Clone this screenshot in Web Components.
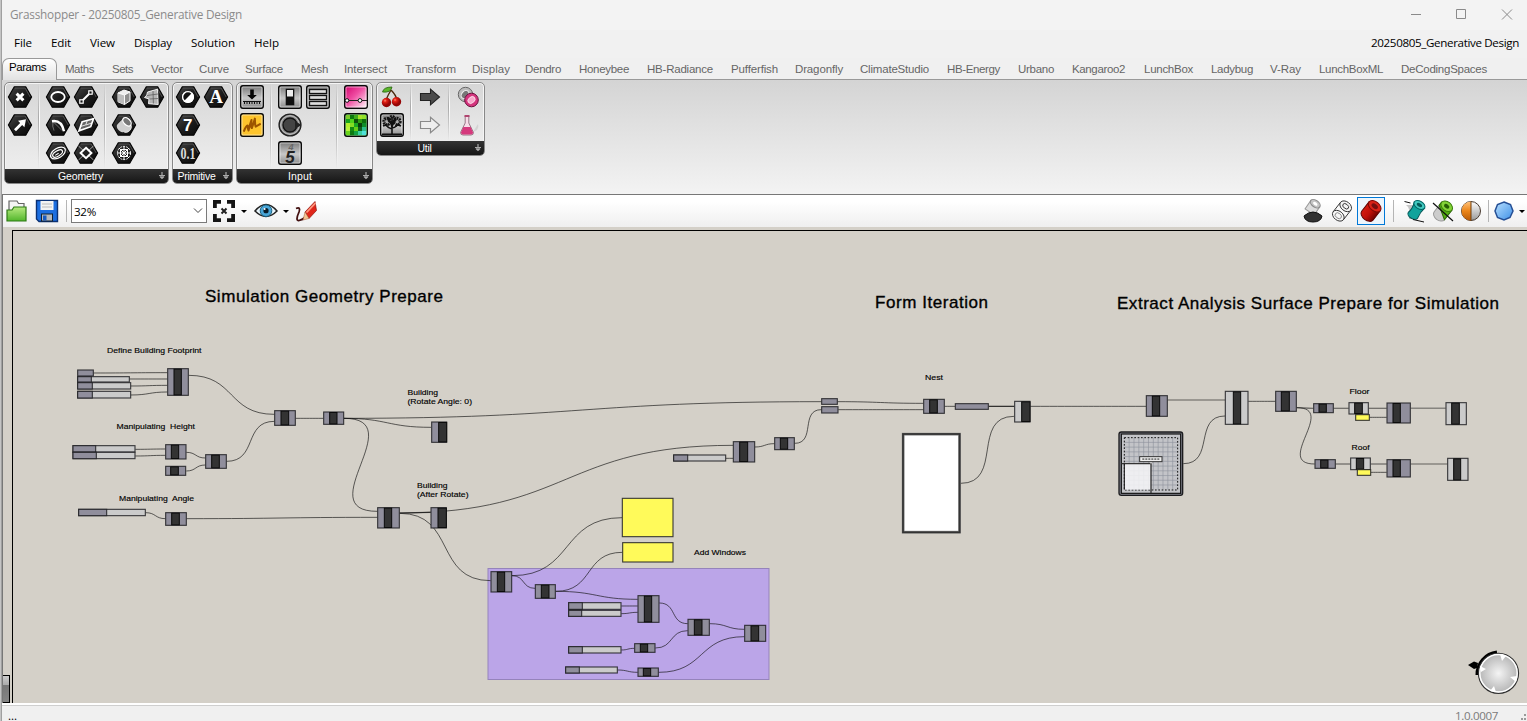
<!DOCTYPE html>
<html lang="en">
<head>
<meta charset="utf-8">
<title>Grasshopper - 20250805_Generative Design</title>
<style>
html,body{margin:0;height:100%;overflow:hidden;background:#f0f0f0}
</style>
</head>
<body>
<gh-window></gh-window>
<script>
function define(name, html, init) {
  const t = document.createElement('template');
  t.innerHTML = html;
  customElements.define(name, class extends HTMLElement {
    constructor() { super(); this.attachShadow({mode: 'open'}).append(t.content.cloneNode(true)); }
    connectedCallback() { if (init && !this.ready) { this.ready = true; init(this, this.shadowRoot); } }
  });
}

/* Text tracked to an exact width */
define('fit-text', `<style>:host{display:block;white-space:nowrap;flex:none}span{display:inline-block;white-space:pre}</style><span><slot></slot></span>`, (el, root) => {
  const w = +el.getAttribute('w'), s = root.querySelector('span');
  s.style.letterSpacing = (w - s.getBoundingClientRect().width) / el.textContent.length + 'px';
  el.style.width = w + 'px';
});

const hex = inner => `<path d="M8.3 3.8H19.7L25.6 14 19.7 24.2H8.3L2.4 14Z" fill="url(#hx)" stroke="#050505" stroke-width="1.2" stroke-linejoin="round"/><path d="M8.9 5H19.1L24.2 14" fill="none" stroke="#666" stroke-width=".7"/>${inner}`;
const tile = (fill, inner) => `<rect x="2.7" y="2.7" width="22.6" height="22.6" rx="2.2" fill="${fill}" stroke="#0a0a0a" stroke-width="1.4"/><rect x="4" y="4" width="20" height="20" rx="1" fill="none" stroke="#fff" stroke-opacity=".65" stroke-width=".8"/>${inner}`;
const W = 'fill="none" stroke="#fff"';
const greens = ['#7dcb2b','#0d7a10','#3fae1c','#a6e22b','#8ee02a','#16a51a','#4fd31c','#0c4e0c','#2f9d12','#0d6e0e','#b3f02d','#86dc24','#1aa722','#0b3f0b','#0f8e2a','#b7f23a','#138a13','#66cf16','#0e5f20','#2bbd8b','#6ad41b','#0a7a10','#11a040','#39d0a0','#4fe0d8'];
const ICONS = {
  point: hex(`<path d="M10.6 10.6l6.8 6.8M17.4 10.6l-6.8 6.8" ${W} stroke-width="3"/>`),
  vector: hex(`<path d="M8 18.2l6.2-6.2-2.2-2.2 8-1.6-1.6 8-2.2-2.2-6.2 6.2z" fill="#fff"/>`),
  circle: hex(`<ellipse cx="14" cy="14" rx="6.7" ry="5" ${W} stroke-width="1.8"/>`),
  line: hex(`<path d="M10 18l8-8" ${W} stroke-width="2"/><rect x="7.8" y="16.8" width="3.4" height="3.4" fill="#111" stroke="#fff" stroke-width="1.2"/><rect x="16.8" y="7.8" width="3.4" height="3.4" fill="#111" stroke="#fff" stroke-width="1.2"/>`),
  arc: hex(`<path d="M8 10.200q9.500-1.500 12 10" ${W} stroke-width="2.400"/><path d="M9 10.500q-1 5 1 9M9 10.500l9 9" ${W} stroke-width=".6" opacity=".6"/>`),
  plane: hex(`<path d="M10.2 10.800l11.300-3-2.800 7.900-11.700 4.100z" fill="#666" stroke="#fff" stroke-width="1.700"/><path d="M8.8 15.4l5-1.500 1.500-4.500M13.800 14l6-2" ${W} stroke-width=".8"/>`),
  curve: hex(`<g transform="rotate(-32 14 14)"><ellipse cx="14" cy="14" rx="8.2" ry="4.8" ${W} stroke-width="1.300"/><ellipse cx="13.4" cy="14.2" rx="5.5" ry="2.6" ${W} stroke-width="1.200"/><path d="M10.4 14.5h4" ${W}/></g>`),
  grid: hex(`<path d="M6.5 7l15 14M21.5 7l-15 14" ${W} stroke-width=".9" opacity=".65"/><path d="M14 8.8l5.4 5.2-5.4 5.2L8.6 14z" fill="#222" stroke="#fff" stroke-width="2"/>`),
  box: hex(`<path d="M14 7l6 2v8.800l-5.500 3.700-6.500-2.700V10z" fill="#909090" stroke="#fff"/><path d="M8 10l6.500 2v9.500l-6.500-2.700z" fill="#bdbdbd"/><path d="M8 10l6-3 6 2-5.500 3z" fill="#eee"/><path d="M8 10l6.500 2v9.500M14.500 12L20 9" ${W} stroke-width=".9"/>`),
  brep: hex(`<path d="M9.500 9l10-2.800.7 15.300-9.700-.800.500-4.700-4.500-1.500q3-2 3-5.500z" fill="#b5b5b5" stroke="#fff" stroke-width=".9"/><path d="M9 12.500l11-1.500M15 8l.400 12.500M11.500 16l8.500-.500" stroke="#555" fill="none" stroke-width=".7"/>`),
  cylinder: hex(`<g transform="rotate(45 14 14)"><path d="M9 10v8.500a5 3.500 0 0 0 10 0V10z" fill="#d0d0d0" stroke="#fff" stroke-width=".6" transform="rotate(-90 14 14)"/></g><g transform="rotate(-45 14 14)"><path d="M10 8.800h8.500v10.400H10a3.500 5.200 0 0 1 0-10.400z" fill="#cfcfcf"/></g><ellipse cx="17" cy="10.800" rx="3.200" ry="5" transform="rotate(-45 17 10.800)" fill="#777" stroke="#fff" stroke-width="1.300"/>`),
  mesh: hex(`<circle cx="14" cy="14" r="6.600" ${W} stroke-width=".9" stroke-dasharray="2 1"/><path d="M14 7v14M7 14h14M9 9l10 10M19 9L9 19M10.500 10.500h7v7h-7z" ${W} stroke-width="1"/>`),
  bool: hex(`<circle cx="14" cy="14" r="6" fill="#fff"/><path d="M18.2 9.8A6 6 0 0 1 9.8 18.2z" transform="rotate(180 14 14)" fill="#111"/><circle cx="14" cy="14" r="5.4" ${W} stroke-width="1.4"/>`),
  text: hex(`<text x="14" y="20.2" text-anchor="middle" font-family="Liberation Serif,serif" font-weight="700" font-size="19" fill="#fff">A</text>`),
  int: hex(`<text x="13.8" y="20.200" text-anchor="middle" font-family="Liberation Sans,sans-serif" font-weight="700" font-size="17" fill="#fff">7</text>`),
  num: hex(`<text x="14" y="19.800" text-anchor="middle" textLength="15" lengthAdjust="spacingAndGlyphs" font-family="Liberation Serif,serif" font-weight="700" font-size="17" fill="#ddd">0.1</text>`),
  button: tile('url(#gr)', `<path d="M12.2 6.500h3.600v5.500h3L14 16.600 9.200 12h3z" fill="#050505"/><path d="M5 18.500h18M6.500 18v3M9 18v3M11.500 18v3M14 18v3M16.500 18v3M19 18v3M21.500 18v3" stroke="#111" stroke-width="1"/>`),
  graph: tile('#fdc42c', `<path d="M5.500 19q2.500-5 4-5 0 4 .500 5 2-6 4-10-1 6-.500 8 2-4 4-9-.500 6 0 8l4.500-2" transform="rotate(-6 14 14)" fill="none" stroke="#9c5500" stroke-width="2.100" stroke-linecap="round" stroke-linejoin="round"/>`),
  toggle: tile('url(#gr)', `<rect x="9.700" y="5.700" width="8.600" height="16.600" fill="#111"/><rect x="11" y="7" width="6" height="6.500" fill="#eee"/>`),
  list: tile('url(#gr)', `<g fill="#ddd" stroke="#111" stroke-width="1.300"><rect x="5.500" y="6.500" width="17" height="4"/><rect x="5.500" y="12.500" width="17" height="4"/><rect x="5.500" y="18.500" width="17" height="4"/></g>`),
  knob: `<circle cx="14" cy="14" r="10.900" fill="#888" stroke="#222" stroke-width="1.400"/><circle cx="14" cy="14" r="9.300" fill="none" stroke="#ccc" stroke-width=".9"/><circle cx="14" cy="14" r="7" fill="#444" stroke="#111" stroke-width="1.300"/><path d="M19 10l6.500 4-6.500 4z" fill="#222"/>`,
  digit: tile('url(#gr)', `<text x="15" y="10.500" text-anchor="middle" font-family="Liberation Sans,sans-serif" font-style="italic" font-weight="700" font-size="9" fill="#666">4</text><text x="14" y="24" text-anchor="middle" font-family="Liberation Sans,sans-serif" font-style="italic" font-weight="700" font-size="17" fill="#222">5</text>`),
  slider: tile('url(#pk)', `<path d="M3 17.500h22" stroke="#222" stroke-width="1.200"/><circle cx="5" cy="17.500" r="1.800" fill="#fff" stroke="#111"/><circle cx="18" cy="17.500" r="1.900" fill="#fff" stroke="#111"/>`),
  swatch: tile('#2a2', greens.map((c, i) => `<rect x="${4 + i % 5 * 4}" y="${4 + (i / 5 | 0) * 4}" width="4.100" height="4.100" fill="${c}"/>`).join('')),
  cherry: `<path d="M13 7q-3 5-5 10M13 7q5 5 6 10" fill="none" stroke="#4c2a10" stroke-width="1.400"/><path d="M4.500 9q1-5 9.500-5-1 6-9.500 5z" fill="#5bb82a" stroke="#276010" stroke-width=".8"/><circle cx="8.500" cy="19.500" r="4.700" fill="url(#rd)"/><circle cx="18.500" cy="18.800" r="4.700" fill="url(#rd)"/>`,
  tree: tile('url(#gr)', `<path d="M14 24v-8M14 18q-4-1-7-5M14 17q5-1 7-5M14 16q-1-5-4-8M14 16q1-5 4-8M14 18v-12M10 14q-3 0-5 1M18 14q3 0 5 1" stroke="#111" stroke-width="1.600" fill="none"/><g fill="none" stroke="#111" stroke-dasharray="1.600 .8"><circle cx="9" cy="10.500" r="3.200" stroke-width="3"/><circle cx="14" cy="8.500" r="3" stroke-width="3"/><circle cx="19" cy="10.500" r="3.200" stroke-width="3"/></g><path d="M4 22.500h20v2H4z" fill="#111"/>`),
  arrowDark: `<path d="M4.500 10.500h10V6.200L23.500 14l-9 7.800v-4.300h-10z" fill="#4b4b4b" stroke="#222" stroke-width="1.100"/>`,
  arrowLight: `<path d="M4.500 10.500h10V6.200L23.500 14l-9 7.800v-4.300h-10z" fill="#eee" stroke="#8a8a8a" stroke-width="1.200"/>`,
  cluster: `<circle cx="11.500" cy="11.500" r="7.200" fill="#bbb" stroke="#666"/><ellipse cx="11" cy="11.500" rx="3.200" ry="4.500" transform="rotate(40 11 11.500)" fill="#777" stroke="#eee"/><circle cx="17.500" cy="17" r="6.800" fill="#d4347d" stroke="#6d0f3d"/><ellipse cx="17.500" cy="17" rx="4" ry="3" transform="rotate(-40 17.500 17)" fill="#f8a7cb" stroke="#fff" stroke-width=".6"/>`,
  flask: `<path d="M19 21l5-8q1 3-1 6z" fill="#999" opacity=".25"/><path d="M11.200 5v7L6.500 21.500q0 2.500 2.500 2.500h8q2.500 0 2.500-2.500L14.800 12V5z" fill="#f7dce8" stroke="#8e6b7c" stroke-width=".9"/><path d="M9.300 16L7 21.500q0 2 2 2h8q2 0 2-2L16.700 16z" fill="#d53a7d"/><path d="M10.500 5h5" stroke="#b0446f" stroke-width="2"/>`,
  open: `<path d="M6 14V4h8l1.500 2.500H21V15" fill="#f4f4f4" stroke="#666" stroke-width="1.200"/><path d="M4 24V13h5l2-3h12v14z" fill="url(#gn)" stroke="#2d7a14" stroke-width="1.200"/>`,
  save: `<path d="M3.500 3.500h21v21H6l-2.500-2.500z" fill="#1c6ee0" stroke="#0b3174" stroke-width="1.400"/><rect x="7.500" y="4" width="13" height="9" fill="#f3f3f3"/><path d="M9 7h10M9 10h10" stroke="#bbb"/><rect x="8.500" y="17" width="11" height="7" fill="#b5b8bd" stroke="#123"/><rect x="10" y="18.500" width="3.500" height="5" fill="#175ac0"/>`,
  extents: `<path d="M3 11V3h8v3.800H6.800V11zM17 3h8v8h-3.800V6.800H17zM3 17h3.800v4.200H11V25H3zM21.200 17H25v8h-8v-3.800h4.200z" fill="#151515"/><path d="M11.500 11.500l5 5M16.500 11.500l-5 5" stroke="#222" stroke-width="2"/>`,
  eye: `<path d="M3 14Q14 1 25 14 14 25 3 14z" fill="#e8f4fa" stroke="#222" stroke-width="1.500"/><circle cx="14" cy="13.700" r="5.800" fill="#49a6d8" stroke="#17607f"/><circle cx="14" cy="13.700" r="2.600" fill="#0a1c28"/><circle cx="12.600" cy="12" r="1" fill="#fff"/>`,
  pencil: `<path d="M4 11.500q5-2 3 3.500-4 9 0 8.500 4-1 6-3" fill="none" stroke="#421010" stroke-width="1.800"/><path d="M13 15L23 4.500l1.500 9L17 21.500z" fill="#e0261a" stroke="#8d140d" stroke-width=".7"/><path d="M14.500 15.500L23.500 6" stroke="#ff9a80" stroke-width="1.800"/><path d="M13 15l4 6.500-6 1.500z" fill="#f2c592" stroke="#a5583a" stroke-width=".5"/>`,
  shadeHalf: `<g transform="rotate(35 14 10)"><path d="M8.500 6h11v10h-11z" fill="#ddd" stroke="#999"/><ellipse cx="14" cy="6" rx="5.500" ry="3.400" fill="#c4c4c4" stroke="#888"/><ellipse cx="14" cy="6" rx="2.500" ry="1.500" fill="#fff"/></g><path d="M5 19q9-8 18 0-1 6-9 6t-9-6z" fill="#333" stroke="#111"/>`,
  wire: `<g transform="rotate(38 14 14)" fill="none" stroke="#333" stroke-width=".9"><path d="M7.500 8v12M20.500 8v12"/><ellipse cx="14" cy="8" rx="6.500" ry="4.600" fill="#f4f4f4"/><ellipse cx="14" cy="8" rx="3.300" ry="2.200"/><ellipse cx="14" cy="20" rx="6.500" ry="4.600"/><ellipse cx="14" cy="20" rx="3.500" ry="2.500" stroke="#888"/></g>`,
  shaded: `<g transform="rotate(38 14 14)"><path d="M6.800 8v12a7.200 4.500 0 0 0 14.400 0V8z" fill="url(#rc)" stroke="#5c0505"/><ellipse cx="14" cy="8" rx="7.200" ry="4.700" fill="#d92318" stroke="#7b0906"/><ellipse cx="14" cy="8" rx="3.600" ry="2.200" fill="#761010"/></g>`,
  teal: `<path d="M5 8q5 3 3 14h5V8z" fill="#999" opacity=".55"/><g transform="rotate(30 15 13)"><path d="M9.500 7q2 6 0 12a5.500 3.500 0 0 0 11 0q-1-6 1-12z" fill="#10a39c" stroke="#055"/><ellipse cx="15.500" cy="7" rx="6" ry="3.800" fill="#43cac1" stroke="#066"/><ellipse cx="15.500" cy="7" rx="3" ry="1.700" fill="#045b59"/></g><path d="M3.500 4.500l6 1.500M12 22.500l11 2.500" stroke="#111"/>`,
  green: `<g transform="rotate(38 14 14)"><path d="M7.500 8v12a6.500 4.500 0 0 0 13 0V8z" fill="#ccc" stroke="#999"/><path d="M20.500 8v12L7.500 12V8z" fill="#54ac12" stroke="#2c6b05"/><ellipse cx="14" cy="8" rx="6.500" ry="4.500" fill="#82d336" stroke="#397d0b"/><ellipse cx="14" cy="8" rx="3" ry="2" fill="#275f04"/></g><path d="M4 6l20 18" stroke="#111" stroke-width="1.200"/>`,
  ball: `<circle cx="14" cy="14" r="9.500" fill="url(#sv)" stroke="#4a3b31"/><path d="M14 4.500a9.500 9.500 0 0 0 0 19z" fill="url(#og)"/><path d="M14 4.500v19" stroke="#704010"/>`,
  gem: `<path d="M14 5l6.500 2.500 2.500 6.500-3 6.500-6 2.500-6.500-2.500L5 14l2.500-6.500z" fill="url(#bl)" stroke="#254f95" stroke-width="1.500"/>`
};
const DEFS = `<defs><linearGradient id="hx" x1="0" y1="0" x2="1" y2="1"><stop offset="0" stop-color="#454545"/><stop offset=".5" stop-color="#1d1d1d"/><stop offset="1" stop-color="#080808"/></linearGradient><linearGradient id="gr" x1="0" y1="0" x2="0" y2="1"><stop offset="0" stop-color="#777"/><stop offset=".55" stop-color="#c8c8c8"/><stop offset="1" stop-color="#8a8a8a"/></linearGradient><linearGradient id="pk" x1="0" y1="0" x2="1" y2="1"><stop offset="0" stop-color="#d3006c"/><stop offset=".45" stop-color="#ef4fa3"/><stop offset="1" stop-color="#fff"/></linearGradient><radialGradient id="rd" cx=".35" cy=".3"><stop offset="0" stop-color="#ff8a6f"/><stop offset=".35" stop-color="#e21f14"/><stop offset="1" stop-color="#950505"/></radialGradient><linearGradient id="gn" x1="0" y1="0" x2="0" y2="1"><stop offset="0" stop-color="#b7ea80"/><stop offset="1" stop-color="#52b62c"/></linearGradient><linearGradient id="rc"><stop offset="0" stop-color="#d41b10"/><stop offset=".5" stop-color="#c01009"/><stop offset="1" stop-color="#720303"/></linearGradient><linearGradient id="bl" x1="0" y1="0" x2="1" y2="1"><stop offset="0" stop-color="#b9e0ff"/><stop offset="1" stop-color="#3d8fe6"/></linearGradient><linearGradient id="sv" x1="0" y1="0" x2="0" y2="1"><stop offset="0" stop-color="#fff"/><stop offset="1" stop-color="#999"/></linearGradient><linearGradient id="og" x1="0" y1="0" x2="0" y2="1"><stop offset="0" stop-color="#ffc27a"/><stop offset=".5" stop-color="#ec8518"/><stop offset="1" stop-color="#b85a06"/></linearGradient></defs>`;

define('gh-icon', `<style>:host{display:block;width:28px;height:28px;flex:none}svg{display:block}</style>`, (el, root) => {
  root.innerHTML += `<svg width="28" height="28" viewBox="0 0 28 28">${DEFS}${ICONS[el.getAttribute('name')] || ''}</svg>`;
});

/* Ribbon panel: groups of icon columns over a black caption */
define('gh-panel', `<style>
:host{display:block;flex:none;box-sizing:border-box;border:1px solid #888;border-radius:5px;background:linear-gradient(#d6d6d6,#ececec 80%);overflow:hidden;box-shadow:inset 0 0 0 1px #f5f5f5}
.body{display:flex;padding:0 1px}
.group{display:flex}.col{display:flex;flex-direction:column}
.sep{width:10px;background:linear-gradient(#0000,#aaa 40%,#0000) 4px 0/1px 100% no-repeat,linear-gradient(#0000,#fff 40%,#0000) 5px 0/1px 100% no-repeat}
.cap{display:flex;justify-content:center;align-items:center;height:14px;background:linear-gradient(#333,#161616);color:#fff;font:10.500px/13px "Liberation Sans",sans-serif;position:relative}
svg{position:absolute;right:2px;top:3px}
</style><div class="body"></div><div class="cap"><fit-text></fit-text><svg width="8" height="8"><path d="M4 0v7M1 3.500h6M2 4.500l2 2 2-2" stroke="#aaa" fill="none" stroke-width="1.200"/></svg></div>`, (el, root) => {
  const body = root.querySelector('.body'), rows = el.getAttribute('rows');
  body.style.height = rows * 28 + 2 + 'px';
  body.innerHTML = el.getAttribute('icons').split('|').map(g => `<div class="group">${g.split('/').map(c => `<div class="col">${c.split(',').map(i => `<gh-icon name="${i}"></gh-icon>`).join('')}</div>`).join('')}</div>`).join('<div class="sep"></div>');
  const shift = +el.getAttribute('shift') || 0;
  const f = document.createElement('fit-text');
  f.setAttribute('w', el.getAttribute('tw'));
  f.textContent = el.getAttribute('label');
  f.style.marginRight = shift + 'px';
  root.querySelector('fit-text').replaceWith(f);
  el.style.width = el.getAttribute('w') + 'px';
});

define('gh-titlebar', `<style>
:host{display:flex;height:30px;background:#f3f3f3;align-items:center;padding-left:8px;color:#8b8b8b;font:11.800px/29px "Open Sans",sans-serif}
fit-text{margin-top:-1px}
svg{margin-left:auto}</style><fit-text w="232">Grasshopper - 20250805_Generative Design</fit-text>
<svg width="130" height="30"><path d="M14 14.500h10M59.500 9.500h9v9h-9zM105 9.500l10 10M115 9.500l-10 10" fill="none" stroke="#8a8a8a"/></svg>`);

define('gh-menubar', `<style>
:host{display:flex;height:28px;background:#f1f1f1;align-items:center;padding:0 8px 0 12px;color:#000;font:11.600px/26px "Open Sans",sans-serif}
nav{display:flex;gap:19px}.doc{margin-left:auto}fit-text{margin-top:-2px}</style>
<nav><fit-text w="18">File</fit-text><fit-text w="20">Edit</fit-text><fit-text w="25">View</fit-text><fit-text w="38">Display</fit-text><fit-text w="44">Solution</fit-text><fit-text w="25">Help</fit-text></nav><fit-text class="doc" w="148">20250805_Generative Design</fit-text>`);

const TABS = [['Params',9,37],['Maths',65,29],['Sets',112,21],['Vector',151,32],['Curve',199,30],['Surface',245,38],['Mesh',301,27],['Intersect',344,43],['Transform',405,51],['Display',472,38],['Dendro',525,36],['Honeybee',579,50],['HB-Radiance',647,66],['Pufferfish',731,47],['Dragonfly',795,48],['ClimateStudio',860,69],['HB-Energy',947,53],['Urbano',1018,36],['Kangaroo2',1072,53],['LunchBox',1144,49],['Ladybug',1211,42],['V-Ray',1270,31],['LunchBoxML',1319,64],['DeCodingSpaces',1401,86]];
define('gh-tabs', `<style>
:host{display:flex;height:22px;background:#f0f0f0;font:11.500px/22px "Liberation Sans",sans-serif;color:#666;box-shadow:inset 0 -1px #999}
.tab{flex:none}.on{box-sizing:border-box;border:1px solid #999;border-bottom:0;border-radius:7px 7px 0 0;background:linear-gradient(#fff,#e2e2e2);color:#000;line-height:17px;padding-left:6px;height:22px}</style>`, (el, root) => {
  root.innerHTML += TABS.map(([t, x, w], i) => {
    const next = TABS[i + 1] ? TABS[i + 1][1] : 1527;
    return i ? `<div class="tab" style="width:${next - x}px"><fit-text w="${w}">${t}</fit-text></div>` : `<div class="tab on" style="width:55px;margin-right:8px"><fit-text w="${w}">${t}</fit-text></div>`;
  }).join('');
});

define('gh-ribbon', `<style>:host{display:flex;box-sizing:border-box;height:114px;align-items:flex-start;gap:3px;padding:2px;background:linear-gradient(#d4d4d4,#f3f3f3)}</style>
<gh-panel w="165" rows="3" tw="45" shift="12" label="Geometry" icons="point,vector|circle,arc,curve/line,plane,grid|box,cylinder,mesh/brep"></gh-panel>
<gh-panel w="61" rows="3" tw="38" shift="12" label="Primitive" icons="bool,int,num/text"></gh-panel>
<gh-panel w="137" rows="3" tw="24" shift="9" label="Input" icons="button,graph|toggle,knob,digit/list|slider,swatch"></gh-panel>
<gh-panel w="109" rows="2" tw="14" shift="12" label="Util" icons="cherry,tree|arrowDark,arrowLight|cluster,flask"></gh-panel>`);

define('gh-toolbar', `<style>
:host{display:flex;box-sizing:border-box;height:33px;border-top:1px solid #777;background:linear-gradient(#fff 20%,#efefef);align-items:center;font:11.600px "Open Sans",sans-serif}
i{width:1px;height:22px;background:#b5b5b5;flex:none}
.combo{box-sizing:border-box;width:136px;height:24px;border:1px solid #7a7a7a;background:#fff;display:flex;align-items:center;padding:0 3px 0 2px;margin:0 4px 0 4px;color:#000}
.combo svg{margin-left:auto}
b{width:0;height:0;border:3px solid #0000;border-top-color:#000;border-bottom:0;flex:none}
.on{box-sizing:border-box;width:28px;height:28px;border:1px solid #0078d7;background:#eef5fb;display:grid;place-items:center}
.on gh-icon{margin:-1px}
</style>
<gh-icon name="open"></gh-icon><gh-icon name="save" style="margin-left:2px"></gh-icon><i style="margin-left:5px"></i>
<div class="combo"><fit-text w="22">32%</fit-text><svg width="10" height="6"><path d="M1 .5l4 4 4-4" fill="none" stroke="#444"/></svg></div>
<gh-icon name="extents" style="margin-left:-1px"></gh-icon><b style="margin-left:3px"></b><gh-icon name="eye" style="margin-left:5px"></gh-icon><b style="margin-left:3px"></b><gh-icon name="pencil" style="margin-left:3px"></gh-icon>
<gh-icon name="shadeHalf" style="margin-left:auto"></gh-icon><gh-icon name="wire" style="margin-left:1px"></gh-icon><div class="on" style="margin-left:1px"><gh-icon name="shaded"></gh-icon></div><i style="margin-left:8px"></i>
<gh-icon name="teal" style="margin-left:7px"></gh-icon><gh-icon name="green"></gh-icon><gh-icon name="ball"></gh-icon><i style="margin-left:3px"></i><gh-icon name="gem" style="margin-left:1px"></gh-icon><b style="margin:0 2px 0 1px"></b>`);

/* Definition graph. Each cluster has its own origin and a third-of-a-pixel unit. */
const P = '#908e9c', L = '#cbcbcb', D = '#333';
const box = (x1, y1, x2, y2, f) => `<rect x="${x1 + 1}" y="${y1 + 1}" width="${x2 - x1 - 2}" height="${y2 - y1 - 2}" fill="${f}" stroke="#1f1f22" stroke-opacity=".85" stroke-width="3.400"/>`;
const comp = (x1, y1, x2, y2, a, b, f = P) => box(x1, y1, x2, y2, f) + `<rect x="${a + 1}" y="${y1 + 2.500}" width="${b - a - 2}" height="${y2 - y1 - 5}" fill="${D}" stroke="#0b0b0b" stroke-width="3"/>`;
const slid = (x1, y1, x2, y2, s) => box(x1, y1, x2, y2, L) + box(x1, y1, s + 1, y2, P);
const wire = (x1, y1, x2, y2, c, w = 2.800, o = .7) => { c = c || Math.hypot(x2 - x1, y2 - y1) / 2; return `<path d="M${x1} ${y1}C${x1 + c} ${y1} ${x2 - c} ${y2} ${x2} ${y2}" fill="none" stroke="#111" stroke-opacity="${o}" stroke-width="${w}"/>`; };
const cluster = (x, y, wires, nodes) => [`<g transform="translate(${x} ${y}) scale(.33333)">${wires.map(a => wire(...a)).join('')}</g>`, `<g transform="translate(${x} ${y}) scale(.33333)">${nodes.join('')}</g>`];
const mdGrid = () => { let s = ''; for (let i = 1; i < 11; i++) s += `M${73 + i * 14.500} 203v156M73 ${203 + i * 14.200}h160`; return s; };
const CLUSTERS = [
  cluster(60, 340, [[101,99,322,98],[209,117,322,117],[213,138,322,136],[213,165,322,156],[386,106,643,223],[707,235,790,235],[226,328,316,327],[226,348,316,346],[379,337,436,354],[379,393,436,375],[500,364,643,244],[257,518,316,536],[380,536,952,532],[852,235,2284,185],[852,235,1113,262],[852,235,952,514,205]],
    [box(52,89,101,109,P), slid(52,109,209,127,94), slid(52,127,213,148,97), slid(52,153,213,175,97), comp(322,85,386,167,341,365), comp(643,211,707,257,662,687), comp(790,215,852,254,808,832), slid(38,316,226,337,107), slid(38,336,226,357,109), comp(316,313,379,358,333,357), comp(316,378,378,407,331,356), comp(436,343,500,386,454,479), slid(55,507,257,528,140), comp(316,517,380,557,334,359)]),
  cluster(340, 380, [[179,399,272,397,0,3.500],[179,400,452,602],[179,399,1179,196]],
    [comp(274,125,321,188,295,321), comp(272,382,320,445,293,320), comp(112,382,179,445,132,156)]),
  cluster(480, 490, [[96,257,426,83],[96,257,165,295],[227,304,427,187],[227,304,473,328],[424,348,473,348],[424,371,473,367],[538,339,623,401],[424,480,463,475],[526,474,623,422],[413,540,473,547],[536,547,793,440],[689,401,793,418]],
    [box(426,24,580,141,'#fffa5a'), box(427,157,580,217,'#fffa5a'), comp(32,244,96,307,51,75), comp(165,283,227,326,183,208), comp(473,316,538,398,492,516), comp(623,387,689,437,642,667), comp(793,405,858,455,812,837), comp(463,460,526,488,480,504), comp(473,533,536,560,489,513), slid(265,337,424,359,307), slid(265,360,424,380,305), slid(265,469,424,490,307), slid(256,530,413,550,298)]),
  cluster(660, 370, [[533,95,790,100],[535,119,790,119],[854,109,885,109],[986,109,1063,109,0,3.500,.9],[902,340,1062,139],[285,231,343,221],[404,220,484,119],[198,265,219,265],[1111,109,1458,109]],
    [box(484,85,533,104,P), box(484,109,535,130,P), comp(790,87,854,131,808,833), box(885,100,986,119,P), comp(1063,93,1111,157,1084,1111,L), comp(219,214,285,277,238,264), comp(343,202,404,240,360,384), slid(40,254,198,274,83), `<rect x="729.500" y="192.500" width="169" height="294" fill="#fff" stroke="#777" stroke-width="8"/><rect x="729" y="192" width="170" height="295" fill="none" stroke="#333" stroke-width="5"/>`]),
  cluster(1100, 370, [[203,90,375,90,0,5,.4],[445,94,526,94],[590,113,640,115,0,4,.5],[701,115,746,115,0,4,.5],[806,115,860,115,0,4,.5],[809,142,860,142],[932,115,1037,115,0,4.500,.4],[707,282,751,282,0,4,.5],[812,282,860,282,0,4,.5],[813,307,860,307],[932,282,1042,282,0,4.500,.4],[590,113,644,282,123],[250,281,375,138]],
    [comp(138,76,203,140,156,180), comp(375,63,445,164,399,423,L), comp(526,63,590,125,543,569), comp(640,100,701,129,656,680), comp(746,97,806,133,763,788,L), box(766,133,809,152,'#fffa5a'), comp(860,98,932,160,878,902), comp(1037,97,1100,165,1054,1079,L), comp(644,268,707,296,661,685), comp(751,263,812,300,768,792,L), box(771,298,813,317,'#fffa5a'), comp(860,268,932,322,878,902), comp(1042,264,1105,332,1060,1083,L),
     `<rect x="57" y="186" width="191" height="190" rx="7" fill="#83858f" stroke="#1c1c1f" stroke-width="4"/><rect x="64" y="192" width="178" height="178" fill="#c3c4c8" stroke="#111" stroke-width="3.500"/><path d="${mdGrid()}" stroke="#8d929c" stroke-width="1.800"/><rect x="73" y="203" width="160" height="157" fill="none" stroke="#111" stroke-width="3" stroke-dasharray="5 5"/><rect x="74" y="281" width="79" height="78" fill="#f4f4f6" fill-opacity=".88"/><path d="M64 281h89v88" fill="none" stroke="#333" stroke-width="4"/><path d="M73 281v78" stroke="#111" stroke-width="3"/><path d="M147 275l6 7 6-7" fill="#eee" stroke="#555"/><rect x="119" y="260" width="67" height="15" fill="#eee" stroke="#333" stroke-width="3"/><path d="M127 267.500h52" stroke="#777" stroke-width="5" stroke-dasharray="6 3"/>`])
];
const label = (x, y, w, s, t, k = .15) => `<text x="${x}" y="${y}" font-size="${s}" textLength="${w}" lengthAdjust="${s > 10 ? 'spacing' : 'spacingAndGlyphs'}" stroke="#000" stroke-width="${k}">${t}</text>`;
define('gh-canvas', `<style>
:host{display:flex;box-sizing:border-box;height:476px;padding-top:3px;background:#d4d0c8}
.gutter{width:9px;display:flex;align-items:flex-end;box-sizing:border-box;flex:none}
.grip{box-sizing:border-box;width:7px;height:28px;border:1px solid #000;border-left:0;background:linear-gradient(#ccc 0,#aaa 35%,#777 36%,#858585)}
.sheet{flex:1;border:1px solid #000;border-right:0;border-bottom:0;overflow:hidden}
svg{display:block}text{font-family:"Liberation Sans",Arial,sans-serif;fill:#000;white-space:pre}
</style><div class="gutter"><div class="grip"></div></div><div class="sheet"></div>`, (el, root) => {
  root.querySelector('.sheet').innerHTML = `<svg width="1514" height="472" viewBox="13 231 1514 472"><defs><radialGradient id="nv"><stop offset="0" stop-color="#f4f4f4"/><stop offset="1" stop-color="#b4b4b4"/></radialGradient></defs>
<rect x="488" y="568.500" width="281" height="111" fill="#bba5e8" stroke="#9583bb"/>
${CLUSTERS.map(c => c[0]).join('')}${CLUSTERS.map(c => c[1]).join('')}
${label(205,302,238,17,'Simulation Geometry Prepare',.35)}${label(875,308,113,17,'Form Iteration',.35)}${label(1117,309,382,17,'Extract Analysis Surface Prepare for Simulation',.35)}
${label(107,353,94.500,8,'Define Building Footprint')}${label(116.500,429,78.500,8,'Manipulating&#160; Height')}${label(119,501,75,8,'Manipulating&#160; Angle')}
${label(407.500,395,30.500,8,'Building')}${label(407.500,404,64.500,8,'(Rotate Angle: 0)')}${label(417,488.300,30.500,8,'Building')}${label(417,497.300,51.500,8,'(After Rotate)')}
${label(694,554.500,52,8,'Add Windows')}${label(925,380.300,18,8,'Nest')}${label(1349.500,394,20,8,'Floor')}${label(1351.500,450,18,8,'Roof')}
<path d="M1477.500 675A22 22 0 0 1 1497 652.500" fill="none" stroke="#000" stroke-width="4"/><path d="M1468 665l6-3.500 4 1.500-1 5-3 1z"/>
<circle cx="1498.500" cy="673.300" r="20" fill="url(#nv)" stroke="#333" stroke-width="1.300"/><circle cx="1498.500" cy="673.300" r="18.700" fill="none" stroke="#fff" stroke-width="1.500"/>
<path d="M1500 654l6 2-4 5zM1480 666l6 3-5 3zM1517 676l-7 1 6 5zM1490 691l4-5 2 6z" fill="#fff"/></svg>`;
});

define('gh-status', `<style>
:host{display:flex;box-sizing:border-box;height:18px;background:#f0f0f0;border-top:2px solid #fff;box-shadow:inset 0 1px #cfcfcf;color:#7b7b7b;font:11.600px/16px "Open Sans",sans-serif;padding-left:6px}
fit-text{padding-top:3px;height:13px}.dots{color:#000}.ver{margin-left:auto}
svg{margin-left:22px;flex:none}</style><fit-text class="dots" w="9">...</fit-text><fit-text class="ver" w="43">1.0.0007</fit-text><svg width="7" height="16"><path d="M4 9h2v2H4zM1 13h2v2H1zM4 13h2v2H4z" fill="#999"/></svg>`);

define('gh-window', `<style>
:host{display:flex;box-sizing:border-box;width:1527px;height:721px;overflow:hidden}
aside{width:2px;flex:none;background:linear-gradient(90deg,#c4c4c4 50%,#a0a0a0 50%)}
main{width:1525px;display:flex;flex-direction:column}
.work{border-left:1px solid #777}
</style><aside></aside><main><gh-titlebar></gh-titlebar><gh-menubar></gh-menubar><gh-tabs></gh-tabs><gh-ribbon></gh-ribbon><div class="work"><gh-toolbar></gh-toolbar><gh-canvas></gh-canvas></div><gh-status></gh-status></main>`);
</script>
</body>
</html>
